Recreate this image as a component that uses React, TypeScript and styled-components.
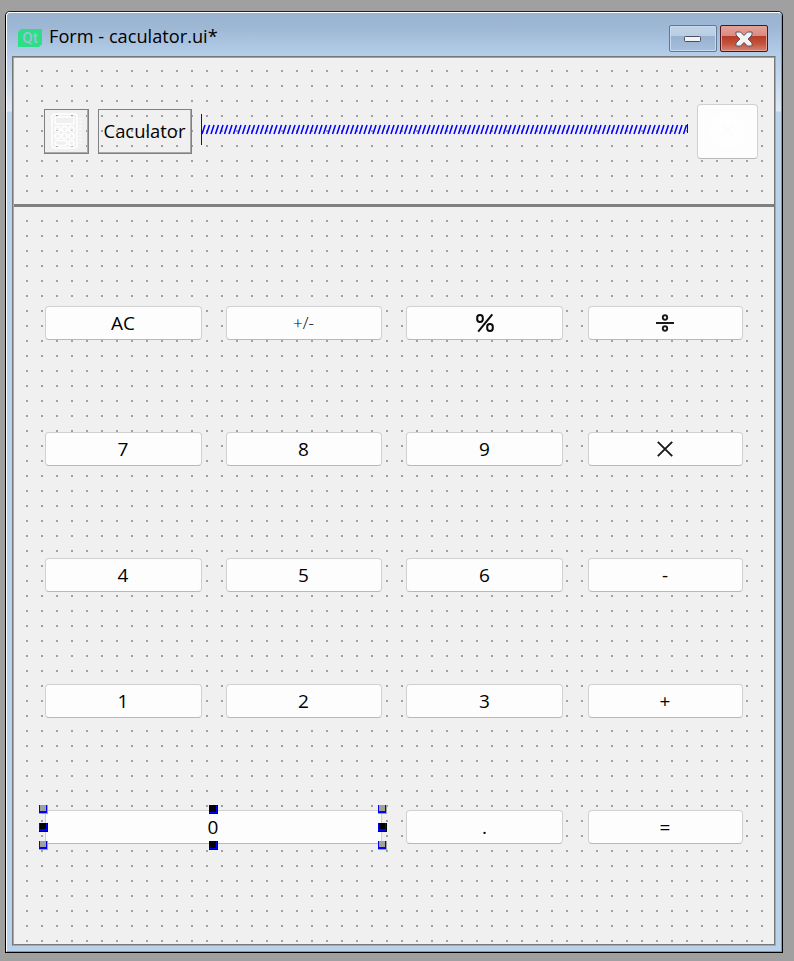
import React from "react";
import styled, { createGlobalStyle, css } from "styled-components";

const GlobalStyle = createGlobalStyle`
  * { box-sizing: border-box; }
  body { margin: 0; background: #a0a0a0; overflow: hidden; }
`;

const Desktop = styled.div`
  width: 794px;
  height: 961px;
  padding: 11px 0 0 5px;
  background: #a0a0a0;
  font-family: "Open Sans", "Noto Sans", sans-serif;
  color: #000;
`;

const WindowFrame = styled.div`
  width: 778px;
  height: 942px;
  border: 1px solid #000;
  border-top-color: #222;
  border-radius: 5px 5px 0 0;
  overflow: hidden;
  background: #fff;
`;

const Chrome = styled.div`
  height: 940px;
  border: 1px solid #fff;
  border-right-color: #37b8da;
  border-bottom-color: #37b8da;
  border-radius: 4px 4px 0 0;
  padding: 0 6px 6px 5px;
  background: linear-gradient(#99b4d1 0, #9db7d5 14px, #b5cee9 43px, #bfd5ec 60px, #dce8f5 98px, #b9d1ea 99px);
`;

const TitleBar = styled.header`
  display: flex;
  align-items: flex-start;
  height: 43px;
  padding: 12px 7px 0 6px;
`;

const Title = styled.h1`
  flex: 1;
  margin: -1px 0 0 7px;
  font-size: 18.2px;
  font-weight: 400;
  line-height: 24px;
`;

const QtIcon = styled.svg`
  width: 24px;
  height: 18px;
  margin-top: 4px;
  overflow: visible;
`;

const CaptionButton = styled.button<{ $danger?: boolean }>`
  display: flex;
  align-items: center;
  justify-content: center;
  width: 48px;
  height: 27px;
  margin-right: 3px;
  padding: 2px 0 0;
  border: 1px solid #65788f;
  border-radius: 2px;
  background: linear-gradient(#c0d3e8 0, #b9cde4 10px, #98b1ce 10px, #a5bfdc 100%);
  box-shadow: inset 0 0 0 1px #c8daed;
  ${(p) =>
    p.$danger &&
    css`
      margin-right: 0;
      padding: 0;
      border-color: #471821;
      background: linear-gradient(#e5a29a 0, #d98b80 10px, #b43c26 10px, #c4523b 70%, #d58474 100%);
      box-shadow: inset 0 0 0 1px #e2a092;
    `}
`;

const Form = styled.main`
  height: 890px;
  width: 764px;
  border: 1px solid;
  border-color: #777 #a8a8a8 #a8a8a8 #777;
`;

const Canvas = styled.div`
  height: 888px;
  border: 1px solid;
  border-color: #a0a0a0 #777 #777 #a8a8a8;
  background-image:
    linear-gradient(#f0f0f0 13px, transparent 13px),
    linear-gradient(90deg, #f0f0f0 13px, #a0a0a0 13px);
  background-size: 15px 15px;
  background-position: -1px -1px;
`;

const Header = styled.section`
  display: flex;
  align-items: flex-start;
  height: 149px;
  padding: 46px 16px 0 30px;
  border-bottom: 3px solid #808080;
`;

const LabelBox = styled.div<{ $width: number }>`
  display: flex;
  align-items: center;
  justify-content: center;
  width: ${(p) => p.$width}px;
  height: 45px;
  margin: 5px 9px 0 0;
  padding: 0 1px 2px 0;
  border: 1px solid #808080;
  box-shadow: inset -1px -1px 0 #a8a8a8;
  font-size: 18.4px;
`;

const Spacer = styled.svg`
  width: 487px;
  height: 32px;
  margin: 10px 9px 0 0;
`;

const buttonFace = css`
  border: 1px solid #d0d0d0;
  border-bottom-color: #b9b9b9;
  border-radius: 4px;
  background: #fdfdfd;
  padding: 0;
`;

const CloseKey = styled.button`
  ${buttonFace}
  width: 61px;
  height: 55px;
`;

const Keypad = styled.section`
  display: grid;
  grid-template-columns: 157px 156px 157px 155px;
  grid-auto-rows: 34px;
  column-gap: 24px;
  row-gap: 92px;
  padding: 99px 0 0 31px;
`;

const Key = styled.button<{ $small?: boolean; $last?: boolean; $centered?: boolean }>`
  ${buttonFace}
  display: flex;
  align-items: center;
  justify-content: center;
  padding-right: ${(p) => (p.$centered ? 0 : 1)}px;
  font-family: inherit;
  font-size: ${(p) => (p.$small ? 17 : 19)}px;
  font-weight: ${(p) => (p.$small ? 300 : 400)};
  line-height: 24px;
  color: #000;
  ${(p) => p.$last && "margin-left: 1px; margin-right: -1px;"}
`;

const SelectedKey = styled(Key)`
  grid-column: span 2;
  position: relative;
  border-radius: 0;
`;

const Handle = styled.i<{ $x: "l" | "m" | "r"; $y: "t" | "m" | "b"; $active?: boolean }>`
  position: absolute;
  width: 9px;
  height: 9px;
  left: ${(p) => ({ l: "-7px", m: "163px", r: "332px" })[p.$x]};
  top: ${(p) => ({ t: "-6px", m: "12px", b: "30px" })[p.$y]};
  background: ${(p) => (p.$active ? "#000" : "#a0a0a0")};
  ${(p) =>
    p.$x === "m"
      ? "box-shadow: inset -1px -1px 0 #000, inset -2px 0 0 #00f, inset 0 -2px 0 #00f;"
      : `box-shadow: inset -1px -1px 0 ${p.$active ? "#000" : "#a0a0a0"}, inset 1px 0 0 #00f, inset -2px -3px 0 #00f;`}
`;

const Glyph = styled.svg`
  width: 20px;
  height: 20px;
`;

const CalculatorIcon = () => (
  <svg width="34" height="38" viewBox="0 0 34 38" fill="none" stroke="#fff" strokeWidth="1.5">
    <rect x="3" y="2" width="25" height="34" rx="3" />
    <rect x="6" y="5" width="19" height="7" rx="1" />
    {[8.5, 15.5, 22.5].map((x) =>
      [17, 24].map((y) => <circle key={`${x}-${y}`} cx={x} cy={y} r="2.6" />)
    )}
    <rect x="6" y="28.5" width="12" height="5" rx="2.5" />
    <circle cx="22.5" cy="31" r="2.6" />
    <path d="M31.5 6v28" strokeDasharray="1.5 2" strokeWidth="3" stroke="#f8f8f8" />
  </svg>
);

const Percent = () => (
  <Glyph viewBox="0 0 20 20" fill="none" stroke="#0a0a0a" strokeWidth="2">
    <rect x="2.2" y="2" width="5.6" height="7" rx="2.7" />
    <rect x="12.2" y="11" width="5.6" height="7" rx="2.7" />
    <path d="M17.3 1.3 3.2 18.7" />
  </Glyph>
);

const Divide = () => (
  <Glyph viewBox="0 0 20 20" fill="none" stroke="#1a1a1a" strokeWidth="1.9">
    <circle cx="10" cy="4.5" r="2.2" />
    <circle cx="10" cy="15.5" r="2.2" />
    <path d="M1 10h18" strokeWidth="2" />
  </Glyph>
);

const Times = () => (
  <Glyph viewBox="0 0 20 20" fill="none" stroke="#1a1a1a" strokeWidth="1.9">
    <path d="m2.8 2.8 14.4 14.4M17.2 2.8 2.8 17.2" />
  </Glyph>
);

const handles: Array<["l" | "m" | "r", "t" | "m" | "b"]> = [
  ["l", "t"], ["m", "t"], ["r", "t"],
  ["l", "m"], ["r", "m"],
  ["l", "b"], ["m", "b"], ["r", "b"],
];

export default function App() {
  return (
    <>
      <GlobalStyle />
      <Desktop>
        <WindowFrame>
          <Chrome>
            <TitleBar>
              <QtIcon viewBox="0 0 24 18">
                <path d="M3 0h21v15l-3 3H0V3z" fill="#2cde85" />
                <text x="12" y="13.5" textAnchor="middle" fontFamily="Roboto" fontSize="15" fontWeight="500" fill="#a3bfd9">Qt</text>
              </QtIcon>
              <Title>Form - caculator.ui*</Title>
              <CaptionButton aria-label="Minimize">
                <svg width="18" height="7" viewBox="0 0 18 7">
                  <rect x=".5" y=".5" width="16" height="5" rx="1" fill="#f2f2f2" stroke="#4b4d63" />
                </svg>
              </CaptionButton>
              <CaptionButton $danger aria-label="Close">
                <svg width="18" height="16" viewBox="0 0 18 16">
                  <path d="M1 1h4.5L9 4.5 12.5 1H17v3l-4 4 4 4v3h-4.5L9 11.5 5.5 15H1v-3l4-4-4-4z" fill="#f3f3f3" stroke="#53566a" strokeLinejoin="round" />
                </svg>
              </CaptionButton>
            </TitleBar>
            <Form>
              <Canvas>
                <Header>
                  <LabelBox $width={45}><CalculatorIcon /></LabelBox>
                  <LabelBox $width={94}>Caculator</LabelBox>
                  <Spacer viewBox="0 0 487 32" fill="none" stroke="#00f">
                    <path d="M.5 0v31M486.5 10v9" />
                    {Array.from({ length: 108 }, (_, i) => (
                      <path key={i} d={`M${1 + i * 4.5} 20l3-9`} strokeWidth="1.55" />
                    ))}
                  </Spacer>
                  <CloseKey aria-label="Close form">
                    <svg width="37" height="37" viewBox="0 0 37 37">
                      <circle cx="18.5" cy="18.5" r="18" fill="#fefefe" />
                      <path d="m13 13 11 11m0-11L13 24" stroke="#fcfcfc" strokeWidth="2" />
                    </svg>
                  </CloseKey>
                </Header>
                <Keypad>
                  <Key>AC</Key>
                  <Key $small>+/-</Key>
                  <Key $centered><Percent /></Key>
                  <Key $last><Divide /></Key>
                  <Key>7</Key>
                  <Key>8</Key>
                  <Key $centered>9</Key>
                  <Key $last><Times /></Key>
                  <Key>4</Key>
                  <Key>5</Key>
                  <Key $centered>6</Key>
                  <Key $last>-</Key>
                  <Key>1</Key>
                  <Key>2</Key>
                  <Key $centered>3</Key>
                  <Key $last>+</Key>
                  <SelectedKey>
                    0
                    {handles.map(([x, y]) => (
                      <Handle key={x + y} $x={x} $y={y} $active={x === "m" || y === "m"} />
                    ))}
                  </SelectedKey>
                  <Key $centered>.</Key>
                  <Key $last>=</Key>
                </Keypad>
              </Canvas>
            </Form>
          </Chrome>
        </WindowFrame>
      </Desktop>
    </>
  );
}
